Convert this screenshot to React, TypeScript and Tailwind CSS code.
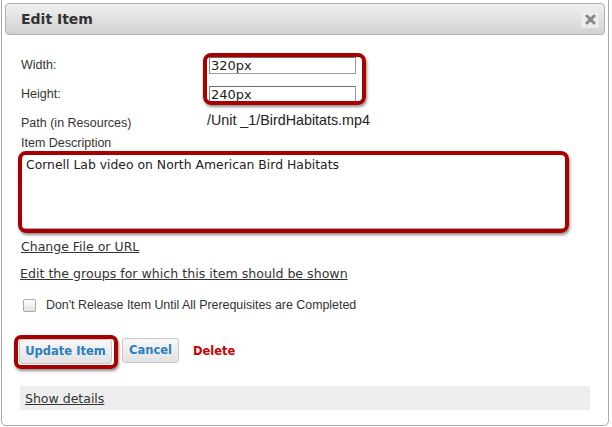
import React from "react";

const verdana = { fontFamily: '"DejaVu Sans", Verdana, sans-serif' };
const arial = { fontFamily: '"Liberation Sans", Arial, sans-serif' };

function RedBox({ className }: { className: string }) {
  return (
    <div
      className={`pointer-events-none absolute border-[4px] border-[#a80000] shadow-[1px_2px_3px_rgba(0,0,0,0.45)] ${className}`}
    />
  );
}

export default function App() {
  return (
    <div className="w-[612px] h-[427px] bg-white overflow-hidden text-[#333]">
      <div className="ml-[1px] -mt-[4px] w-[608px] h-[430px] border border-[#a7a7a7] rounded-[5px] bg-white pt-[6px] px-[3px]">
        {/* Header */}
        <div className="flex items-center justify-between h-[32px] border border-[#b0b0b0] rounded-[4px] bg-gradient-to-b from-[#f0f0f0] to-[#d2d2d2] pl-[15px] pr-[5px]">
          <span className="text-[14px] font-bold text-[#333]" style={verdana}>
            Edit Item
          </span>
          <div className="w-[18px] h-[18px] rounded-[3px] bg-[#ececec] flex items-center justify-center">
            <svg width="11" height="11" viewBox="0 0 11 11">
              <path d="M2 2 L9 9 M9 2 L2 9" stroke="#888" strokeWidth="3" strokeLinecap="round" />
            </svg>
          </div>
        </div>

        {/* Body */}
        <div className="pl-[16px]">
          <div className="relative mt-[22px]">
            <div className="flex items-center h-[17px]">
              <span className="w-[188px] text-[12.5px] leading-[15px]" style={arial}>Width:</span>
              <div
                className="w-[147px] h-[17px] border border-[#999] border-t-[#6e6e6e] border-l-[#888] bg-white text-[13px] leading-[15px] pl-[1px] text-[#222]"
                style={verdana}
              >
                320px
              </div>
            </div>
            <div className="flex items-center h-[17px] mt-[12px]">
              <span className="w-[188px] text-[12.5px] leading-[15px]" style={arial}>Height:</span>
              <div
                className="w-[147px] h-[17px] border border-[#999] border-t-[#6e6e6e] border-l-[#888] bg-white text-[13px] leading-[15px] pl-[1px] text-[#222]"
                style={verdana}
              >
                240px
              </div>
            </div>
            <RedBox className="left-[182px] w-[163px] -top-[4px] h-[52px] rounded-[8px]" />
          </div>

          <div className="flex items-start mt-[9px]">
            <span className="w-[186px] mt-[4px] text-[12.5px] leading-[15px]" style={arial}>
              Path (in Resources)
            </span>
            <span className="text-[14.3px] leading-[16px] text-[#222]" style={arial}>
              /Unit _1/BirdHabitats.mp4
            </span>
          </div>

          <div className="mt-[5px] text-[12.5px] leading-[15px]" style={arial}>
            Item Description
          </div>

          <div className="relative mt-[3px] w-[545px] h-[75px]">
            <div
              className="w-full h-full border border-[#aaa] bg-white pl-[4px] pt-[3px] text-[12.4px] leading-[14px] text-[#222]"
              style={verdana}
            >
              Cornell Lab video on North American Bird Habitats
            </div>
            <RedBox className="-left-[3px] -right-[3px] -top-[3px] -bottom-[4px] rounded-[8px]" />
          </div>

          <div className="mt-[10px] text-[12.5px] leading-[15px] underline" style={verdana}>
            Change File or URL
          </div>
          <div className="mt-[12px] -ml-[1px] text-[12.6px] leading-[15px] underline" style={verdana}>
            Edit the groups for which this item should be shown
          </div>

          <div className="mt-[17px] flex items-center h-[15px]">
            <div className="ml-[2px] w-[13px] h-[13px] rounded-[2px] border border-[#a9a9a9] bg-gradient-to-b from-white to-[#e3e3e3]" />
            <span className="ml-[10px] text-[12.4px] leading-[15px] text-[#333]" style={arial}>
              Don't Release Item Until All Prerequisites are Completed
            </span>
          </div>

          <div className="mt-[26px] -ml-[2px] flex items-center h-[25px]" style={verdana}>
            <div className="relative">
              <div className="w-[93px] h-[25px] rounded-[3px] border border-[#c8c8c8] bg-gradient-to-b from-[#f7f7f7] to-[#e2e2e2] flex items-center justify-center text-[11.5px] font-bold text-[#2a7fc0]">
                Update Item
              </div>
              <RedBox className="-left-[5px] -right-[6px] -top-[4px] -bottom-[5px] rounded-[7px]" />
            </div>
            <div className="ml-[10px] -mt-[2px] w-[57px] h-[25px] rounded-[3px] border border-[#c8c8c8] bg-gradient-to-b from-[#f7f7f7] to-[#e2e2e2] flex items-center justify-center text-[11.5px] font-bold text-[#2a7fc0]">
              Cancel
            </div>
            <span className="ml-[14px] text-[11.5px] font-bold text-[#cc0000]">Delete</span>
          </div>

          <div className="mt-[22px] -ml-[1px] w-[570px] h-[24px] bg-[#eeeeee] flex items-center pl-[5px]">
            <span className="text-[12.5px] leading-[15px] underline" style={verdana}>
              Show details
            </span>
          </div>
        </div>
      </div>
    </div>
  );
}
